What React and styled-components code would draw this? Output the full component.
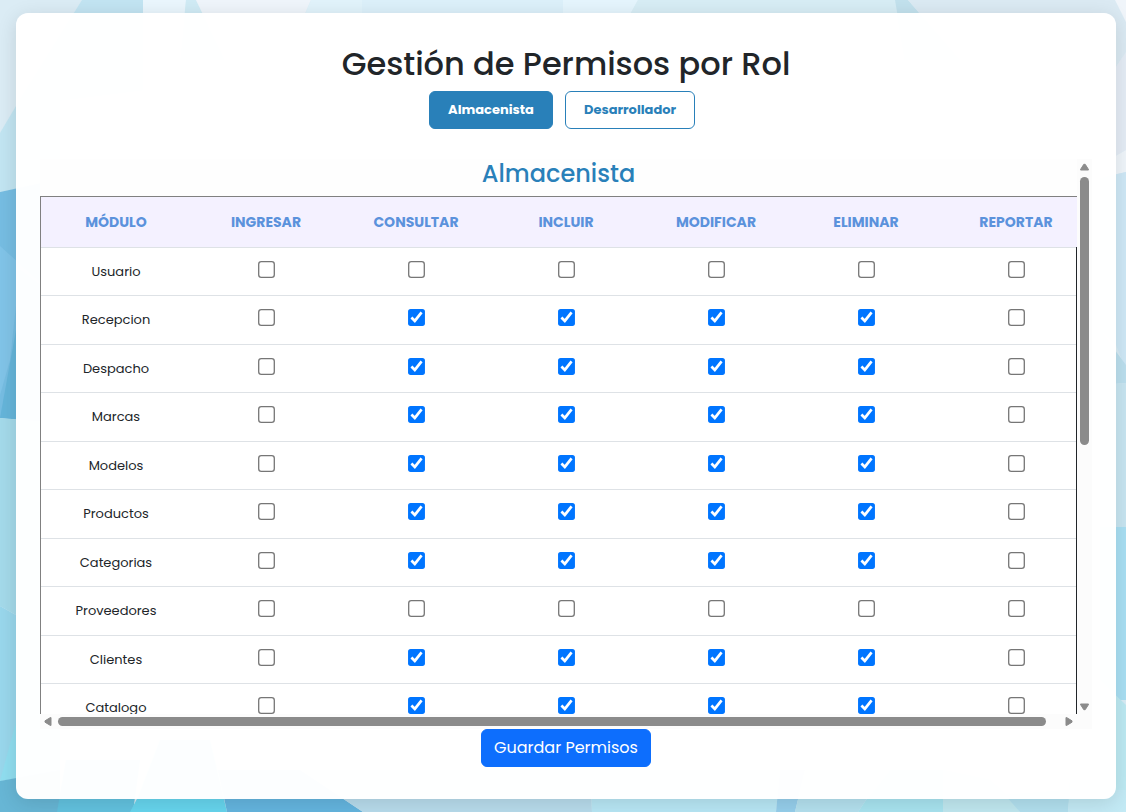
import React, { useState } from "react";
import styled, { createGlobalStyle } from "styled-components";

const GlobalStyle = createGlobalStyle`
  *, *::before, *::after { box-sizing: border-box; }
  body {
    margin: 0;
    color: #212529;
    background: #d9edf6;
    font-family: Poppins, Inter, "Liberation Sans", sans-serif;
    font-size: 16px;
    line-height: 24px;
  }
`;

const Page = styled.div`
  position: relative;
  min-height: 100vh;
  padding: 13px 10px 13px 16px;
`;

const Backdrop = styled.svg`
  position: absolute;
  inset: 0;
  width: 100%;
  height: 100%;
`;

const Card = styled.main`
  position: relative;
  display: flex;
  flex-direction: column;
  align-items: center;
  padding: 32px 24px;
  border-radius: 12px;
  background: rgba(255, 255, 255, 0.98);
  box-shadow: 0 4px 20px rgba(0, 0, 0, 0.12);
`;

const Title = styled.h1`
  margin: 0 0 8px;
  font-size: 32px;
  font-weight: 500;
  line-height: 38px;
`;

const RoleTabs = styled.nav`
  display: flex;
  gap: 12px;
  padding-right: 8px;
  margin-bottom: 30px;
`;

const RoleButton = styled.button`
  width: ${(p) => (p.$wide ? 130 : 124)}px;
  height: 38px;
  padding: 0;
  border: 1px solid #2980b9;
  border-radius: 6px;
  background: ${(p) => (p.$active ? "#2980b9" : "#fff")};
  color: ${(p) => (p.$active ? "#fff" : "#2980b9")};
  font: inherit;
  font-size: 13px;
  font-weight: 700;
  cursor: pointer;
`;

const ScrollPanel = styled.section`
  display: grid;
  grid-template-columns: minmax(0, 1fr) 15px;
  grid-template-rows: 555px 15px;
  width: 100%;
  background: #fcfcfc;
`;

const Viewport = styled.div`
  overflow: auto;
  scrollbar-width: none;
  background: #fefefe;
`;

const RoleName = styled.h2`
  margin: 0 0 8px;
  color: #2980b9;
  font-size: 24px;
  font-weight: 500;
  line-height: 29px;
  text-align: center;
`;

const TableFrame = styled.div`
  position: relative;
  border: 1px solid #808080;
  border-right: 0;

  &::after {
    content: "";
    position: absolute;
    top: 50px;
    right: 0;
    bottom: 0;
    width: 1px;
    background: #212529;
  }
`;

const Table = styled.table`
  width: 1050px;
  table-layout: fixed;
  border-collapse: separate;
  border-spacing: 0;
  background: #fff;
  text-align: center;
`;

const HeadCell = styled.th`
  height: 51px;
  padding: 0;
  border-bottom: 1px solid #dee2e6;
  background: #f4f1ff;
  color: #5b92dc;
  font-size: 14px;
  font-weight: 700;
  text-transform: uppercase;
`;

const Row = styled.tr`
  height: 48px;
  &:nth-child(even) { height: 49px; }
`;

const Cell = styled.td`
  padding: 0;
  border-bottom: 1px solid #dee2e6;
  font-size: 13px;
`;

const CheckCell = styled(Cell)`
  padding-bottom: 5px;
  line-height: 0;
`;

const Check = styled.input`
  width: 13px;
  height: 13px;
  margin: 0;
  transform: scale(1.3);
  accent-color: #0075ff;
  vertical-align: middle;
`;

const Track = styled.div`
  display: flex;
  flex-direction: ${(p) => (p.$vertical ? "column" : "row")};
  align-items: center;
  justify-content: space-between;
  padding: ${(p) => (p.$vertical ? "4px 0 3px" : "0 4px")};
`;

const Rail = styled.div`
  display: flex;
  flex: 1;
  flex-direction: inherit;
  align-self: stretch;
  align-items: center;
  margin: ${(p) => (p.$vertical ? "6px 0" : "0 6px")};
`;

const Thumb = styled.div`
  flex: 0 0 ${(p) => p.$share}%;
  ${(p) => (p.$vertical ? "width" : "height")}: 9px;
  border-radius: 5px;
  background: #8b8b8b;
`;

const SaveButton = styled.button`
  height: 38px;
  width: 170px;
  padding: 0;
  border: 1px solid #0d6efd;
  border-radius: 6px;
  background: #0d6efd;
  color: #fff;
  font: inherit;
  cursor: pointer;
`;

const SHAPES = [
  ["0,0 82,0 68,24 16,106 0,133", "#dbecf5"],
  ["82,0 143,0 143,90 16,106", "#c2e4f2"],
  ["143,0 186,0 182,60 143,60", "#eaf6fd"],
  ["186,0 196,0 225,60 180,60", "#d0ebf5"],
  ["196,0 311,0 285,60 225,60", "#eff5fb"],
  ["311,0 362,0 362,60 285,60", "#e1f3fb"],
  ["362,0 563,0 563,60 362,60", "#dcf0fa"],
  ["563,0 638,0 605,60 563,60", "#e5f5fd"],
  ["638,0 895,0 905,60 605,60", "#d7edf5"],
  ["895,0 908,0 960,60 905,60", "#c2e1ed"],
  ["908,0 1115,0 1126,20 1126,52 1100,90 960,60", "#dbeaf3"],
  ["1115,0 1126,0 1126,22", "#f0f5fa"],
  ["0,133 16,106 60,80 60,180 0,192", "#c2e5f2"],
  ["0,192 60,179 60,423 0,418", "#76bde2"],
  ["0,246 60,300 20,270 10,360 0,395", "#81c4e8"],
  ["60,250 16,330 0,418 60,423", "#65b5da"],
  ["0,418 60,423 60,640 0,606", "#a4daea"],
  ["0,606 60,640 60,770 0,781", "#99d7ec"],
  ["0,781 16,722 60,700 60,772", "#90def0"],
  ["0,781 60,770 60,812 0,812", "#67b6d5"],
  ["57,812 66,760 140,760 133,812", "#62c2df"],
  ["130,812 138,797 160,740 210,740 227,812", "#66d5ee"],
  ["227,812 218,770 300,770 363,812", "#64b5df"],
  ["363,812 300,770 590,770 592,812", "#b8dcec"],
  ["592,812 590,770 780,770 776,812", "#b8e7f5"],
  ["776,812 780,770 805,770 795,812", "#96cfec"],
  ["795,812 805,770 890,770 866,800 858,812", "#b4e1ef"],
  ["858,812 866,800 890,770 943,770 943,812", "#a8e4f0"],
  ["943,812 943,770 990,780 1012,800 1020,812", "#c0e8f0"],
  ["1020,812 1005,795 1070,790 1068,812", "#b2e0ef"],
  ["1068,812 1070,780 1126,780 1126,812", "#c3eaf5"],
  ["1100,90 1126,52 1126,150 1100,165", "#e5edf6"],
  ["1100,165 1126,150 1126,172 1100,178", "#f0f6fb"],
  ["1100,178 1126,172 1126,370 1116,345 1100,330", "#cfe9f7"],
  ["1100,330 1126,365 1126,383 1100,385", "#bce0ef"],
  ["1100,385 1126,383 1126,527 1100,527", "#c8e6f2"],
  ["1100,527 1126,527 1126,700 1100,700", "#a9e0f4"],
  ["1100,680 1126,705 1126,790 1100,790", "#bdeaf3"],
];

const COLUMNS = ["Ingresar", "Consultar", "Incluir", "Modificar", "Eliminar", "Reportar"];
const GRANTED = ["Consultar", "Incluir", "Modificar", "Eliminar"];
const MODULES = [
  { name: "Usuario", granted: [] },
  { name: "Recepcion", granted: GRANTED },
  { name: "Despacho", granted: GRANTED },
  { name: "Marcas", granted: GRANTED },
  { name: "Modelos", granted: GRANTED },
  { name: "Productos", granted: GRANTED },
  { name: "Categorias", granted: GRANTED },
  { name: "Proveedores", granted: [] },
  { name: "Clientes", granted: GRANTED },
  { name: "Catalogo", granted: GRANTED },
];

const ARROWS = {
  up: [9, 8, "M3.8 1.3 H5.2 L8.5 6.5 V7 H0.5 V6.5 Z"],
  down: [9, 8, "M3.8 6.7 H5.2 L8.5 1.5 V1 H0.5 V1.5 Z"],
  left: [8, 9, "M1 3.8 V5.2 L6.5 8.5 H7 V0.5 H6.5 Z"],
  right: [8, 9, "M7 3.8 V5.2 L1.5 8.5 H1 V0.5 H1.5 Z"],
};

function Arrow({ to }) {
  const [w, h, d] = ARROWS[to];
  return (
    <svg width={w} height={h} viewBox={`0 0 ${w} ${h}`} aria-hidden="true">
      <path d={d} fill="#8b8b8b" stroke="#8b8b8b" strokeLinejoin="round" />
    </svg>
  );
}

export default function App() {
  const [role, setRole] = useState("Almacenista");
  return (
    <>
      <GlobalStyle />
      <Page>
        <Backdrop viewBox="0 0 1126 812" preserveAspectRatio="none" aria-hidden="true">
          {SHAPES.map(([points, fill]) => (
            <polygon key={points} points={points} fill={fill} />
          ))}
        </Backdrop>
        <Card>
          <Title>Gestión de Permisos por Rol</Title>
          <RoleTabs>
            {["Almacenista", "Desarrollador"].map((name) => (
              <RoleButton
                key={name}
                type="button"
                $active={role === name}
                $wide={name === "Desarrollador"}
                onClick={() => setRole(name)}
              >
                {name}
              </RoleButton>
            ))}
          </RoleTabs>
          <ScrollPanel>
            <Viewport>
              <RoleName>{role}</RoleName>
              <TableFrame>
                <Table>
                  <thead>
                    <tr>
                      <HeadCell scope="col">Módulo</HeadCell>
                      {COLUMNS.map((c) => (
                        <HeadCell key={c} scope="col">{c}</HeadCell>
                      ))}
                    </tr>
                  </thead>
                  <tbody>
                    {MODULES.map((m) => (
                      <Row key={m.name}>
                        <Cell>{m.name}</Cell>
                        {COLUMNS.map((c) => (
                          <CheckCell key={c}>
                            <Check
                              type="checkbox"
                              aria-label={`${m.name}: ${c}`}
                              defaultChecked={m.granted.includes(c)}
                            />
                          </CheckCell>
                        ))}
                      </Row>
                    ))}
                  </tbody>
                </Table>
              </TableFrame>
            </Viewport>
            <Track $vertical aria-hidden="true">
              <Arrow to="up" />
              <Rail $vertical><Thumb $vertical $share={(100 * 555) / 1078} /></Rail>
              <Arrow to="down" />
            </Track>
            <Track aria-hidden="true">
              <Arrow to="left" />
              <Rail><Thumb $share={(100 * 1037) / 1051} /></Rail>
              <Arrow to="right" />
            </Track>
          </ScrollPanel>
          <SaveButton type="button">Guardar Permisos</SaveButton>
        </Card>
      </Page>
    </>
  );
}
